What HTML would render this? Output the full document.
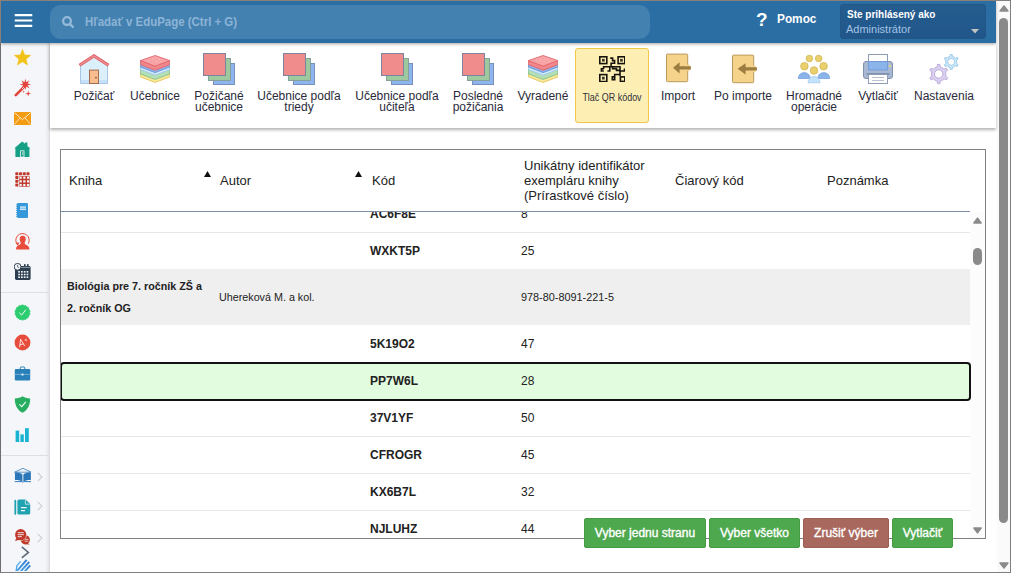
<!DOCTYPE html>
<html lang="sk">
<head>
<meta charset="utf-8">
<title>EduPage</title>
<style>
*{box-sizing:border-box;margin:0;padding:0}
html,body{width:1011px;height:573px;overflow:hidden;background:#fff;font-family:"Liberation Sans",sans-serif;color:#222}
.abs{position:absolute}
#frame{position:absolute;left:0;top:0;width:1011px;height:573px;overflow:hidden;background:#fff}
/* window border */
#b-top{left:0;top:0;width:1011px;height:1px;background:linear-gradient(90deg,#8a8078 0,#8a8078 996px,#808080 996px)}
#b-left{left:0;top:0;width:1px;height:573px;background:linear-gradient(#8a8078 0,#8a8078 43px,#6e6e6e 43px)}
#b-right{left:1010px;top:0;width:1px;height:573px;background:#7f7f7f}
#b-bottom{left:0;top:572px;width:1011px;height:1px;background:#7f7f7f}
/* top bar */
#topbar{left:1px;top:1px;width:995px;height:42px;background:#2b6ea3;box-shadow:0 1px 3px rgba(0,0,0,.35);z-index:5}
#search{left:49px;top:4px;width:600px;height:34px;border-radius:11px;background:#4381b1}
#search .ph{left:35px;top:10px;font-size:12px;font-weight:bold;color:#8db4d6;white-space:nowrap;line-height:14px;transform:scaleX(.954);transform-origin:0 50%}
#help{left:756px;top:8px;color:#fff;font-weight:bold;font-size:13px;white-space:nowrap;line-height:20px}
#help .q{position:absolute;left:-1px;top:1px;font-size:19px;line-height:20px}
#help .t{position:absolute;left:20px;top:0;transform:scaleX(.91);transform-origin:0 50%}
#userbox{left:839px;top:3px;width:146px;height:35px;background:linear-gradient(#255d8f,#21568a);border:1px solid #215687;border-radius:3px}
#userbox .l1{left:6px;top:4px;font-size:10px;font-weight:bold;color:#fff;white-space:nowrap;line-height:12px}
#userbox .l2{left:5px;top:18px;font-size:11px;color:#a3c4e4;white-space:nowrap;line-height:13px}
/* page scrollbar */
#vscroll{left:996px;top:1px;width:14px;height:571px;background:#fafafa;border-left:1px solid #fff}
/* sidebar */
#sidebar{left:1px;top:43px;width:49px;height:529px;background:linear-gradient(90deg,#f5f6f9 0,#f5f6f9 44px,#eeeff2 46px,#e2e3e6 48px,#d6d7da 49px)}
#sidebar svg{position:absolute}
.sep{position:absolute;left:0;width:48px;height:1px;background:#dedfe2}
/* toolbar */
#toolbar{left:50px;top:43px;width:946px;height:85px;background:#fff;box-shadow:0 2px 3px rgba(0,0,0,.3);z-index:3}

.ti{position:absolute;top:0;width:0;height:85px}
.ti .ic{position:absolute}
.ti .ic svg{display:block}
.ti .lbl{position:absolute;top:48px;left:0;transform:translateX(-50%);font-size:12px;line-height:11px;color:#2a2a3a;text-align:center;white-space:nowrap}
/* table */
#tbl{left:61px;top:150px;width:925px;height:389px;border:1px solid #8a8a8a;background:#fff;overflow:hidden}
.th{position:absolute;font-size:13px;line-height:15px;color:#222;white-space:nowrap}
.row{position:absolute;left:0;width:908px;height:37px;border-bottom:1px solid #e6e6e6}
.row .c{position:absolute;left:308px;top:11px;font-size:12px;font-weight:bold;line-height:14px;color:#222}
.row .n{position:absolute;left:460px;top:11px;font-size:12px;line-height:14px;color:#222}

#tbl{left:60px;top:149px;width:926px;height:390px;border:1px solid #808080;background:#fff;overflow:hidden}
#thead{left:0;top:0;width:909px;height:62px;background:#fff;border-bottom:1px solid #7d90aa;z-index:2}
#iscroll{left:909px;top:62px;width:15px;height:326px;background:#fcfcfc}
.row{position:absolute;left:0;width:909px;height:37px;border-top:1px solid #e6e6e6;border-bottom:none}
.row .c{position:absolute;left:309px;top:11px;font-size:12px;font-weight:bold;line-height:14px;color:#222}
.row .n{position:absolute;left:460px;top:11px;font-size:12px;line-height:14px;color:#222}
.row.sel{left:-1px;width:911px;height:39px;border:2px solid #111;border-radius:4px;background:#e2fcdf;z-index:1}
.row.sel .c{left:308px;top:10px}
.row.sel .n{left:459px;top:10px}
.grp{position:absolute;left:0;width:909px;height:56px;background:#efefef}
.grp .g1{position:absolute;left:6px;top:6px;font-size:11px;font-weight:bold;line-height:22px;color:#222;white-space:nowrap;transform:scaleX(.977);transform-origin:0 50%}
.grp .g2{position:absolute;left:158px;top:17px;font-size:11px;line-height:22px;color:#222;white-space:nowrap;transform:scaleX(.977);transform-origin:0 50%}
.grp .g3{position:absolute;left:460px;top:17px;font-size:11px;line-height:22px;color:#222;white-space:nowrap;transform:scaleX(.987);transform-origin:0 50%}
.btn{position:absolute;top:518px;height:30px;border-radius:2px;color:#fff;font-size:12px;line-height:29px;-webkit-text-stroke:.35px #fff;text-align:center;white-space:nowrap;z-index:6}
.g{background:#4ea84e;border:1px solid #469a46}
.r{background:#a9685d;border:1px solid #9c5d53}
</style>
</head>
<body>
<div id="frame">

<!-- top bar -->
<div id="topbar" class="abs">
  <svg class="abs" style="left:13px;top:12px" width="20" height="16" viewBox="0 0 20 16"><rect x="0.7" y="1.1" width="17.6" height="2.2" rx=".4" fill="#fff"/><rect x="0.7" y="6.4" width="17.6" height="2.2" rx=".4" fill="#fff"/><rect x="0.7" y="11.7" width="17.6" height="2.2" rx=".4" fill="#fff"/></svg>
  <div id="search" class="abs">
    <svg class="abs" style="left:11px;top:10px" width="14" height="14" viewBox="0 0 14 14"><circle cx="6" cy="6.1" r="3.9" fill="none" stroke="#94bada" stroke-width="2.3"/><path d="M9 9.1 L11.9 12" stroke="#94bada" stroke-width="2.4" stroke-linecap="round"/></svg>
    <div class="ph abs">Hľadať v EduPage (Ctrl + G)</div>
  </div>
  <div id="help" class="abs"><span class="q">?</span><span class="t">Pomoc</span></div>
  <div id="userbox" class="abs">
    <div class="l1 abs">Ste prihlásený ako</div>
    <div class="l2 abs">Administrátor</div>
    <svg class="abs" style="left:129.5px;top:23.5px" width="8" height="5" viewBox="0 0 8 5"><path d="M0 0 L8 0 L4 4.4 Z" fill="#c4c4c4"/></svg>
  </div>
</div>

<!-- page scrollbar -->
<div id="vscroll" class="abs">
  <svg class="abs" style="left:2px;top:4px" width="10" height="7" viewBox="0 0 10 7"><path d="M5 0.9 L9 6 L1 6 Z" fill="#8a8a8a" stroke="#8a8a8a" stroke-width="1.4" stroke-linejoin="round"/></svg>
  <div class="abs" style="left:2px;top:16.5px;width:9px;height:505.5px;border-radius:4.5px;background:#8a8a8a"></div>
  <svg class="abs" style="left:2px;top:561px" width="10" height="7" viewBox="0 0 10 7"><path d="M1 1 L9 1 L5 6.1 Z" fill="#8a8a8a" stroke="#8a8a8a" stroke-width="1.4" stroke-linejoin="round"/></svg>
</div>

<!-- sidebar -->
<div id="sidebar" class="abs">
  <div class="sep" style="top:249px"></div>
  <div class="sep" style="top:412px"></div>
  <svg style="left:13px;top:6px" width="17" height="17" viewBox="0 0 17 17"><path d="M8.50 0.40 L10.67 6.01 L16.68 6.34 L12.02 10.14 L13.55 15.96 L8.50 12.70 L3.45 15.96 L4.98 10.14 L0.32 6.34 L6.33 6.01 Z" fill="#f2c218" stroke="#f2c218" stroke-width=".6" stroke-linejoin="round"/></svg>
  <svg style="left:13px;top:36px" width="18" height="18" viewBox="0 0 18 18"><path d="M1.8 16.2 L9.8 8.2" stroke="#e0443a" stroke-width="2.6" stroke-linecap="round"/><path d="M11.40 -0.30 L12.32 3.18 L15.43 1.37 L13.62 4.48 L17.10 5.40 L13.62 6.32 L15.43 9.43 L12.32 7.62 L11.40 11.10 L10.48 7.62 L7.37 9.43 L9.18 6.32 L5.70 5.40 L9.18 4.48 L7.37 1.37 L10.48 3.18 Z" fill="#e0443a"/><path d="M8 10 L9.8 8.2" stroke="#f5f6f9" stroke-width=".9"/><path d="M14.20 11.60 L14.84 13.96 L17.20 14.60 L14.84 15.24 L14.20 17.60 L13.56 15.24 L11.20 14.60 L13.56 13.96 Z" fill="#e0443a"/><path d="M9.60 11.40 L9.92 12.48 L11.00 12.80 L9.92 13.12 L9.60 14.20 L9.28 13.12 L8.20 12.80 L9.28 12.48 Z" fill="#e0443a"/></svg>
  <svg style="left:13px;top:69px" width="17" height="13" viewBox="0 0 17 13"><rect x="0" y="0" width="17" height="13" fill="#f39c12"/><path d="M0.3 0.6 L8.5 7.6 L16.7 0.6" fill="none" stroke="#fdf1dd" stroke-width=".9"/><path d="M0.3 12.4 L6 6 M16.7 12.4 L11 6" stroke="#fdf1dd" stroke-width=".8"/></svg>
  <svg style="left:13px;top:98px" width="17" height="16" viewBox="0 0 17 16"><path d="M0.4 7.2 L8.2 0.4 L11 2.8 L11 1.4 L13.4 1.4 L13.4 4.9 L16.4 7.4 L15.4 7.4 L15.4 16 L1.4 16 L1.4 7.2 Z" fill="#16a085"/><rect x="6.6" y="9.8" width="3.4" height="6.2" fill="none" stroke="#f5f6f9" stroke-width=".8"/><rect x="8.2" y="11" width="1" height="3" fill="#f5f6f9" opacity=".6"/></svg>
  <svg style="left:14px;top:129px" width="15" height="15" viewBox="0 0 15.3 15.3"><rect x="0.3" y="0.3" width="3.1" height="3.1" rx=".5" fill="#c0392b"/><rect x="4.1" y="0.3" width="3.1" height="3.1" rx=".5" fill="#c0392b"/><rect x="7.9" y="0.3" width="3.1" height="3.1" rx=".5" fill="#c0392b"/><rect x="11.7" y="0.3" width="3.1" height="3.1" rx=".5" fill="#c0392b"/><rect x="0.3" y="4.1" width="3.1" height="3.1" rx=".5" fill="#c0392b"/><rect x="0.3" y="7.9" width="3.1" height="3.1" rx=".5" fill="#c0392b"/><rect x="0.3" y="11.7" width="3.1" height="3.1" rx=".5" fill="#c0392b"/><rect x="4.2" y="4.2" width="10.8" height="10.8" rx=".8" fill="#c0392b"/><rect x="4.60" y="4.60" width="2.3" height="2.3" fill="#f5f6f9"/><rect x="8.40" y="4.60" width="2.3" height="2.3" fill="#f5f6f9"/><rect x="12.20" y="4.60" width="2.3" height="2.3" fill="#f5f6f9"/><rect x="4.60" y="8.40" width="2.3" height="2.3" fill="#f5f6f9"/><rect x="8.40" y="8.40" width="2.3" height="2.3" fill="#f5f6f9"/><rect x="12.20" y="8.40" width="2.3" height="2.3" fill="#f5f6f9"/><rect x="4.60" y="12.20" width="2.3" height="2.3" fill="#f5f6f9"/><rect x="8.40" y="12.20" width="2.3" height="2.3" fill="#f5f6f9"/><rect x="12.20" y="12.20" width="2.3" height="2.3" fill="#f5f6f9"/></svg>
  <svg style="left:15px;top:160px" width="12" height="15" viewBox="0 0 12 15"><rect x="1" y="0" width="11" height="15" rx="1.2" fill="#3498db"/><rect x="0" y="1.4" width="1.4" height=".9" fill="#3498db"/><rect x="0" y="3.3" width="1.4" height=".9" fill="#3498db"/><rect x="0" y="5.2" width="1.4" height=".9" fill="#3498db"/><rect x="0" y="7.1" width="1.4" height=".9" fill="#3498db"/><rect x="0" y="9.0" width="1.4" height=".9" fill="#3498db"/><rect x="0" y="10.9" width="1.4" height=".9" fill="#3498db"/><rect x="0" y="12.8" width="1.4" height=".9" fill="#3498db"/><rect x="4" y="3.4" width="6" height="3.6" fill="#d6eaf8"/><path d="M4 5.2 L10 5.2" stroke="#3498db" stroke-width=".7"/></svg>
  <svg style="left:13px;top:189px" width="17" height="18" viewBox="0 0 17 18"><path d="M3.6 12.8 A6.7 6.7 0 1 1 14.2 11.8" fill="none" stroke="#e74c3c" stroke-width="1"/><path d="M1.6 10.8 L3.8 13.6 L5.6 10.6 Z" fill="#e74c3c"/><path d="M8.7 3.8 C11.3 3.8 11.9 5.8 11.7 7.6 C11.6 9 10.9 10 10.7 10.8 C10.5 11.8 11 12.4 12.6 13.1 C14.4 13.9 15.2 14.8 15.4 17.6 L2 17.6 C2.2 14.8 3 13.9 4.8 13.1 C6.4 12.4 6.9 11.8 6.7 10.8 C6.5 10 5.8 9 5.7 7.6 C5.5 5.8 6.1 3.8 8.7 3.8 Z" fill="#e74c3c"/></svg>
  <svg style="left:13px;top:219.8px" width="17" height="18" viewBox="0 0 17 18"><rect x="1" y="3" width="15.6" height="14" rx="1.4" fill="#2c3e50"/><rect x="10" y="1" width="1.6" height="3.4" rx=".6" fill="#2c3e50"/><rect x="13" y="1" width="1.6" height="3.4" rx=".6" fill="#2c3e50"/><path d="M7 4.4 L16 4.4" stroke="#f5f6f9" stroke-width=".5"/><rect x="4.2" y="8.0" width="1.7" height="1.6" fill="#f5f6f9"/><rect x="7.0" y="8.0" width="1.7" height="1.6" fill="#f5f6f9"/><rect x="9.8" y="8.0" width="1.7" height="1.6" fill="#f5f6f9"/><rect x="12.6" y="8.0" width="1.7" height="1.6" fill="#f5f6f9"/><rect x="4.2" y="10.7" width="1.7" height="1.6" fill="#f5f6f9"/><rect x="7.0" y="10.7" width="1.7" height="1.6" fill="#f5f6f9"/><rect x="9.8" y="10.7" width="1.7" height="1.6" fill="#f5f6f9"/><rect x="12.6" y="10.7" width="1.7" height="1.6" fill="#f5f6f9"/><rect x="4.2" y="13.4" width="1.7" height="1.6" fill="#f5f6f9"/><rect x="7.0" y="13.4" width="1.7" height="1.6" fill="#f5f6f9"/><rect x="9.8" y="13.4" width="1.7" height="1.6" fill="#f5f6f9"/><rect x="12.6" y="13.4" width="1.7" height="1.6" fill="#f5f6f9"/><circle cx="3.6" cy="3.8" r="3.4" fill="#f5f6f9" stroke="#2c3e50" stroke-width="1"/><path d="M3.6 2 L3.6 4 L5 4.6" fill="none" stroke="#2c3e50" stroke-width=".7"/></svg>
  <svg style="left:13px;top:261px" width="17" height="17" viewBox="0 0 17 17"><path d="M8.50 0.70 L10.10 1.48 L11.88 1.47 L12.99 2.87 L14.60 3.64 L14.99 5.38 L16.10 6.76 L15.70 8.50 L16.10 10.24 L14.99 11.62 L14.60 13.36 L12.99 14.13 L11.88 15.53 L10.10 15.52 L8.50 16.30 L6.90 15.52 L5.12 15.53 L4.01 14.13 L2.40 13.36 L2.01 11.62 L0.90 10.24 L1.30 8.50 L0.90 6.76 L2.01 5.38 L2.40 3.64 L4.01 2.87 L5.12 1.47 L6.90 1.48 Z" fill="#2ecc71" stroke="#2ecc71" stroke-width=".5" stroke-linejoin="round"/><path d="M5.2 8.8 L7.6 11 L11.8 5.8" fill="none" stroke="#eafff1" stroke-width="1"/></svg>
  <svg style="left:13px;top:291px" width="17" height="17" viewBox="0 0 17 17"><circle cx="8.5" cy="8.5" r="7.9" fill="#e74c3c"/><g transform="rotate(-12 8 9)"><path d="M4.8 12.6 L7.4 5 L10 12.6 M5.7 10.2 L9.2 10.2" fill="none" stroke="#fbe3e0" stroke-width=".9"/></g><path d="M10.8 6 L13 6 M11.9 4.9 L11.9 7.1" stroke="#fbe3e0" stroke-width=".7"/></svg>
  <svg style="left:13px;top:323px" width="17" height="15" viewBox="0 0 17 15"><rect x="6.2" y="1" width="4.6" height="3" rx="1" fill="none" stroke="#2980b9" stroke-width="1"/><rect x="0.8" y="3.1" width="15.4" height="11.3" rx="1.2" fill="#2980b9"/><path d="M0.6 8.4 L16.4 8.4" stroke="#8fbfe2" stroke-width=".7"/><rect x="7.4" y="7.4" width="2.2" height="2.2" rx=".6" fill="#d6eaf8"/></svg>
  <svg style="left:13px;top:353px" width="17" height="17" viewBox="0 0 17 17"><path d="M8.5 0.2 C10.6 1.6 13 2.2 16.2 2.4 C16.2 9 13.6 14 8.5 16.8 C3.4 14 0.8 9 0.8 2.4 C4 2.2 6.4 1.6 8.5 0.2 Z" fill="#27ae60"/><path d="M5.4 8.4 L7.8 10.6 L11.8 5.8" fill="none" stroke="#f0fff5" stroke-width="1.1"/></svg>
  <svg style="left:14px;top:385px" width="15" height="14" viewBox="0 0 15 14"><rect x="0.6" y="2.6" width="3.6" height="11.4" fill="#1ab3d2"/><rect x="5.4" y="6.4" width="3.4" height="7.6" fill="#1ab3d2"/><rect x="10" y="0.2" width="3.8" height="13.8" fill="#1ab3d2"/></svg>
  <svg style="left:12.6px;top:425px" width="17.8" height="15" viewBox="0 0 19 15" preserveAspectRatio="none"><path d="M9.5 0.3 L18.4 4.2 L0.6 4.2 Z" fill="none" stroke="#2b77b8" stroke-width=".8"/><path d="M1 4.6 C4 4.4 7 5 9 6.4 L9 13.6 C7 12.4 4 11.8 1 12 Z" fill="#2b77b8"/><path d="M18 4.6 C15 4.4 12 5 10 6.4 L10 13.6 C12 12.4 15 11.8 18 12 Z" fill="#2b77b8"/><path d="M0.8 13.6 L8.6 13.6 L9.5 14.4 L10.4 13.6 L18.2 13.6" fill="none" stroke="#2b77b8" stroke-width="1"/></svg>
  <svg style="left:13px;top:455.6px" width="17" height="16" viewBox="0 0 17 16"><rect x="0.4" y="0.8" width="1.8" height="15" rx=".9" fill="#20a3b1"/><path d="M3.4 2 Q3.4 0.4 5 0.4 L11.6 0.4 L16.2 5 L16.2 14 Q16.2 15.6 14.6 15.6 L5 15.6 Q3.4 15.6 3.4 14 Z" fill="#20a3b1"/><path d="M11.4 0.8 L11.4 5.2 L15.8 5.2" fill="none" stroke="#f5f6f9" stroke-width=".7"/><path d="M7 8.6 L12.6 8.6 M7 11.6 L11 11.6" stroke="#f5f6f9" stroke-width="1.3"/></svg>
  <svg style="left:13px;top:486px" width="17" height="16" viewBox="0 0 17 16"><circle cx="11.3" cy="10.8" r="4.6" fill="#c0392b"/><path d="M13.6 14 L16 15.6 L11.6 15.2 Z" fill="#c0392b"/><circle cx="6.7" cy="5.7" r="6.1" fill="#f5f6f9"/><circle cx="6.7" cy="5.7" r="5.6" fill="#c0392b"/><path d="M2.4 9 L1 12 L5.4 10.8 Z" fill="#c0392b"/><path d="M3.7 3.7 L9.8 3.7 M3.7 5.7 L9.8 5.7 M3.7 7.7 L7.8 7.7" stroke="#f5f6f9" stroke-width=".9"/><path d="M11 10.4 L14.4 10.4 M10.6 12.2 L14.4 12.2" stroke="#f5f6f9" stroke-width=".7"/></svg>
  <svg style="left:36px;top:428.5px" width="6" height="10" viewBox="0 0 6 10"><path d="M0.8 0.8 L5 5 L0.8 9.2" fill="none" stroke="#cccdd0" stroke-width="1.1"/></svg>
  <svg style="left:36px;top:458px" width="6" height="10" viewBox="0 0 6 10"><path d="M0.8 0.8 L5 5 L0.8 9.2" fill="none" stroke="#cccdd0" stroke-width="1.1"/></svg>
  <svg style="left:36px;top:489.5px" width="6" height="10" viewBox="0 0 6 10"><path d="M0.8 0.8 L5 5 L0.8 9.2" fill="none" stroke="#cccdd0" stroke-width="1.1"/></svg>
  <svg style="left:20px;top:503px" width="9" height="13" viewBox="0 0 9 13"><path d="M0.8 0.9 L7.4 6.4 L0.8 11.9" fill="none" stroke="#5d6b7a" stroke-width="1.6"/></svg>
  <svg style="left:14px;top:515px" width="17" height="13" viewBox="0 0 17 13"><defs><linearGradient id="pg" x1="0" y1="0" x2="1" y2="0"><stop offset="0" stop-color="#4aa6e8"/><stop offset="1" stop-color="#2c7bd0"/></linearGradient></defs><g stroke="url(#pg)" stroke-width="1.9" fill="none" stroke-linecap="butt"><path d="M1.2 13.9 L11.6 1.9"/><path d="M5.2 13.9 L14.2 3.9"/><path d="M9.3 13.9 L15.2 7.3"/></g><path d="M1.9 7.4 L1 14" stroke="#4aa6e8" stroke-width="1.3" fill="none"/><path d="M2 7.6 L5.6 3.4" stroke="#4aa6e8" stroke-width="1.3" fill="none"/></svg>
</div>

<!-- toolbar -->
<div id="toolbar" class="abs">
  <div class="ti" style="left:44px"><div class="ic" style="left:-17px;top:10px"><svg width="34" height="32" viewBox="0 0 34 32"><path d="M3.5 11 L17 2.6 L30.5 11 L30.5 30.5 L3.5 30.5 Z" fill="#dcf0fc" stroke="#a8c6e6" stroke-width="1"/><rect x="4" y="27" width="26" height="3" fill="#c5e0f7"/><path d="M2.5 12.3 L17 2.9 L31.5 12.3" fill="none" stroke="#d8585c" stroke-width="3.1" stroke-linejoin="miter"/><path d="M2.8 12.1 L17 3 L31.2 12.1" fill="none" stroke="#f08d90" stroke-width="1.5"/><rect x="12.5" y="17.1" width="9" height="13.4" fill="#f9bd8f" stroke="#a56c4e" stroke-width="1"/><circle cx="19" cy="24.6" r=".9" fill="#7a4a34"/></svg></div><div class="lbl">Požičať</div></div>
  <div class="ti" style="left:105px"><div class="ic" style="left:-15px;top:11.5px"><svg width="30.2" height="28.4" viewBox="0 0 30.2 28.4"><path d="M0.4 17.5 L15.1 23.1 L29.8 17.5 L29.8 21.9 L15.1 27.5 L0.4 21.9 Z" fill="#fbe89a" stroke="#e3c65c" stroke-width=".9" stroke-linejoin="round"/><path d="M0.4 14 L15.1 19.6 L29.8 14 L29.8 18.9 L15.1 24.5 L0.4 18.9 Z" fill="#b4dfb4" stroke="#86c389" stroke-width=".9" stroke-linejoin="round"/><path d="M0.4 11.5 L15.1 17.1 L29.8 11.5 L29.8 14.6 L15.1 20.2 L0.4 14.6 Z" fill="#d0ebfd" stroke="#9cc7ed" stroke-width=".9" stroke-linejoin="round"/><path d="M0.4 9 L15.1 14.6 L29.8 9 L29.8 12.0 L15.1 17.6 L0.4 12.0 Z" fill="#8fb5ee" stroke="#6a93d6" stroke-width=".9" stroke-linejoin="round"/><path d="M0.4 5.6 L15.1 11.2 L29.8 5.6 L29.8 9.7 L15.1 15.299999999999999 L0.4 9.7 Z" fill="#f2878b" stroke="#dc686d" stroke-width=".9" stroke-linejoin="round"/><path d="M0.4 5.6 L15.1 0.5 L29.8 5.6 L15.1 11.1 Z" fill="#f8a3a6" stroke="#e0696e" stroke-width=".9" stroke-linejoin="round"/><g fill="#fcc9ca"><circle cx="9" cy="5.2" r=".5"/><circle cx="12.6" cy="4" r=".5"/><circle cx="16" cy="6.6" r=".5"/><circle cx="19.6" cy="4.6" r=".5"/><circle cx="21.4" cy="6.8" r=".5"/></g></svg></div><div class="lbl">Učebnice</div></div>
  <div class="ti" style="left:169px"><div class="ic" style="left:-16px;top:10px"><svg width="33" height="33" viewBox="0 0 33 33"><rect x="10.5" y="10.5" width="21" height="21" fill="#8db5f0" stroke="#7890b8"/><rect x="5.5" y="5.5" width="22" height="22" fill="#9ec89e" stroke="#86a19a"/><rect x="0.5" y="0.5" width="22" height="22" fill="#f08c8c" stroke="#7b859c"/></svg></div><div class="lbl">Požičané<br>učebnice</div></div>
  <div class="ti" style="left:249px"><div class="ic" style="left:-16px;top:10px"><svg width="33" height="33" viewBox="0 0 33 33"><rect x="10.5" y="10.5" width="21" height="21" fill="#8db5f0" stroke="#7890b8"/><rect x="5.5" y="5.5" width="22" height="22" fill="#9ec89e" stroke="#86a19a"/><rect x="0.5" y="0.5" width="22" height="22" fill="#f08c8c" stroke="#7b859c"/></svg></div><div class="lbl">Učebnice podľa<br>triedy</div></div>
  <div class="ti" style="left:347px"><div class="ic" style="left:-16px;top:10px"><svg width="33" height="33" viewBox="0 0 33 33"><rect x="10.5" y="10.5" width="21" height="21" fill="#8db5f0" stroke="#7890b8"/><rect x="5.5" y="5.5" width="22" height="22" fill="#9ec89e" stroke="#86a19a"/><rect x="0.5" y="0.5" width="22" height="22" fill="#f08c8c" stroke="#7b859c"/></svg></div><div class="lbl">Učebnice podľa<br>učiteľa</div></div>
  <div class="ti" style="left:428px"><div class="ic" style="left:-16px;top:10px"><svg width="33" height="33" viewBox="0 0 33 33"><rect x="10.5" y="10.5" width="21" height="21" fill="#8db5f0" stroke="#7890b8"/><rect x="5.5" y="5.5" width="22" height="22" fill="#9ec89e" stroke="#86a19a"/><rect x="0.5" y="0.5" width="22" height="22" fill="#f08c8c" stroke="#7b859c"/></svg></div><div class="lbl">Posledné<br>požičania</div></div>
  <div class="ti" style="left:493px"><div class="ic" style="left:-15px;top:11.5px"><svg width="30.2" height="28.4" viewBox="0 0 30.2 28.4"><path d="M0.4 17.5 L15.1 23.1 L29.8 17.5 L29.8 21.9 L15.1 27.5 L0.4 21.9 Z" fill="#fbe89a" stroke="#e3c65c" stroke-width=".9" stroke-linejoin="round"/><path d="M0.4 14 L15.1 19.6 L29.8 14 L29.8 18.9 L15.1 24.5 L0.4 18.9 Z" fill="#b4dfb4" stroke="#86c389" stroke-width=".9" stroke-linejoin="round"/><path d="M0.4 11.5 L15.1 17.1 L29.8 11.5 L29.8 14.6 L15.1 20.2 L0.4 14.6 Z" fill="#d0ebfd" stroke="#9cc7ed" stroke-width=".9" stroke-linejoin="round"/><path d="M0.4 9 L15.1 14.6 L29.8 9 L29.8 12.0 L15.1 17.6 L0.4 12.0 Z" fill="#8fb5ee" stroke="#6a93d6" stroke-width=".9" stroke-linejoin="round"/><path d="M0.4 5.6 L15.1 11.2 L29.8 5.6 L29.8 9.7 L15.1 15.299999999999999 L0.4 9.7 Z" fill="#f2878b" stroke="#dc686d" stroke-width=".9" stroke-linejoin="round"/><path d="M0.4 5.6 L15.1 0.5 L29.8 5.6 L15.1 11.1 Z" fill="#f8a3a6" stroke="#e0696e" stroke-width=".9" stroke-linejoin="round"/><g fill="#fcc9ca"><circle cx="9" cy="5.2" r=".5"/><circle cx="12.6" cy="4" r=".5"/><circle cx="16" cy="6.6" r=".5"/><circle cx="19.6" cy="4.6" r=".5"/><circle cx="21.4" cy="6.8" r=".5"/></g></svg></div><div class="lbl">Vyradené</div></div>
  <div class="ti" style="left:628px"><div class="ic" style="left:-12px;top:10px"><svg width="26" height="30" viewBox="0 0 26 30"><rect x="0.5" y="1.1" width="21.2" height="27.6" rx="1" fill="#f5d38b" stroke="#b89a5e"/><rect x="20.7" y="11.6" width="3" height="6.4" fill="#f5d38b"/><path d="M7.0 14.8 L13.6 9.2 L13.6 13.2 L24.9 13.2 L24.9 16.4 L13.6 16.4 L13.6 20.4 Z" fill="#9b7c41"/></svg></div><div class="lbl">Import</div></div>
  <div class="ti" style="left:693px"><div class="ic" style="left:-11px;top:11.2px"><svg width="26" height="30" viewBox="0 0 26 30"><rect x="0.5" y="1.1" width="21.2" height="27.6" rx="1" fill="#f5d38b" stroke="#b89a5e"/><rect x="20.7" y="11.6" width="3" height="6.4" fill="#f5d38b"/><path d="M5.6 14.8 L13.6 9.2 L13.6 13.2 L24.9 13.2 L24.9 16.4 L13.6 16.4 L13.6 20.4 Z" fill="#9b7c41"/></svg></div><div class="lbl">Po importe</div></div>
  <div class="ti" style="left:764px"><div class="ic" style="left:-17px;top:11px"><svg width="34" height="30" viewBox="0 0 34 30">
<path d="M1.2 24.5 A6 5.9 0 0 1 13.2 24.5 Z" fill="#8ab4ea" stroke="#6f9ad8" stroke-width=".7"/>
<path d="M20.8 24.5 A6 5.9 0 0 1 32.8 24.5 Z" fill="#8ab4ea" stroke="#6f9ad8" stroke-width=".7"/>
<path d="M11 28.8 A6 6.3 0 0 1 23 28.8 Z" fill="#c3e2fb" stroke="#9cc3e8" stroke-width=".7"/>
<g fill="#e9d06c" stroke="#cdb150" stroke-width=".7"><circle cx="12.4" cy="4.5" r="3.3"/><circle cx="21.6" cy="4.5" r="3.3"/><circle cx="7.4" cy="12.2" r="3.8"/><circle cx="26.6" cy="12.2" r="3.8"/><circle cx="17" cy="16.5" r="3.8"/></g>
</svg></div><div class="lbl">Hromadné<br>operácie</div></div>
  <div class="ti" style="left:828px"><div class="ic" style="left:-16px;top:10px"><svg width="32" height="32" viewBox="0 0 32 32">
<rect x="6.5" y="1.5" width="19" height="10" fill="#fff" stroke="#8e9db6"/>
<rect x="1.5" y="8.5" width="29" height="17" rx="2.5" fill="#a9b9d4" stroke="#7f92b0"/>
<rect x="6.5" y="8.5" width="19" height="8.5" fill="#8ab4ea" stroke="#6f97d6" stroke-width=".8"/>
<rect x="4.5" y="20" width="23" height="2" fill="#7f92b0"/>
<rect x="6.5" y="21.5" width="19" height="9" fill="#fff" stroke="#8e9db6"/>
<path d="M10 24.5 L22 24.5 M10 27.5 L22 27.5" stroke="#b9c3d2" stroke-width="1"/>
<circle cx="28" cy="13" r="1" fill="#f2dc7a"/>
</svg></div><div class="lbl">Vytlačiť</div></div>
  <div class="ti" style="left:894px"><div class="ic" style="left:-16px;top:10px"><svg width="32" height="32" viewBox="0 0 32 32"><path d="M9.48 11.38 L11.92 11.38 L12.20 13.96 L13.28 14.28 L14.30 14.76 L15.23 15.40 L16.05 16.18 L18.43 15.14 L19.64 17.24 L17.55 18.78 L17.81 19.87 L17.90 21.00 L17.81 22.13 L17.55 23.22 L19.64 24.76 L18.43 26.86 L16.05 25.82 L15.23 26.60 L14.30 27.24 L13.28 27.72 L12.20 28.04 L11.92 30.62 L9.48 30.62 L9.20 28.04 L8.12 27.72 L7.10 27.24 L6.17 26.60 L5.35 25.82 L2.97 26.86 L1.76 24.76 L3.85 23.22 L3.59 22.13 L3.50 21.00 L3.59 19.87 L3.85 18.78 L1.76 17.24 L2.97 15.14 L5.35 16.18 L6.17 15.40 L7.10 14.76 L8.12 14.28 L9.20 13.96 Z M6.50 21.00 A4.2 4.2 0 1 0 14.90 21.00 A4.2 4.2 0 1 0 6.50 21.00 Z" fill="#dad0ef" stroke="#b29dd5" stroke-width=".8" fill-rule="evenodd" stroke-linejoin="round"/><path d="M22.26 1.46 L24.14 1.46 L24.36 3.42 L25.21 3.67 L26.00 4.05 L26.72 4.55 L27.36 5.15 L29.17 4.37 L30.11 5.99 L28.53 7.17 L28.73 8.02 L28.80 8.90 L28.73 9.78 L28.53 10.63 L30.11 11.81 L29.17 13.43 L27.36 12.65 L26.72 13.25 L26.00 13.75 L25.21 14.13 L24.36 14.38 L24.14 16.34 L22.26 16.34 L22.04 14.38 L21.19 14.13 L20.40 13.75 L19.68 13.25 L19.04 12.65 L17.23 13.43 L16.29 11.81 L17.87 10.63 L17.67 9.78 L17.60 8.90 L17.67 8.02 L17.87 7.17 L16.29 5.99 L17.23 4.37 L19.04 5.15 L19.68 4.55 L20.40 4.05 L21.19 3.67 L22.04 3.42 Z M19.70 8.90 A3.5 3.5 0 1 0 26.70 8.90 A3.5 3.5 0 1 0 19.70 8.90 Z" fill="#cde9fc" stroke="#8dbfe0" stroke-width=".8" fill-rule="evenodd" stroke-linejoin="round"/></svg></div><div class="lbl">Nastavenia</div></div>
  <div class="abs" style="left:525px;top:5px;width:74px;height:75px;background:#fdeeb4;border:1px solid #f1c74a;border-radius:3px"></div>
  <div class="ti" style="left:562px"><div class="ic" style="left:-13.4px;top:12.9px"><svg width="26.6" height="26.6" viewBox="0 0 26.6 26.6" fill="none" stroke="#15130c" stroke-width="1.6">
<rect x="0.8" y="0.8" width="7" height="6.8"/><rect x="19.1" y="0.8" width="6.7" height="6.8"/><rect x="0.8" y="18.6" width="7" height="7"/><rect x="21.4" y="20.9" width="4.4" height="4.5"/>
<g fill="#3a372c" stroke="none"><rect x="3" y="2.9" width="2.7" height="2.7"/><rect x="21.1" y="2.9" width="2.7" height="2.7"/><rect x="3" y="20.8" width="2.7" height="2.7"/></g>
<path d="M11.2 2.1 L13.6 2.1 L13.6 4.6 L15.6 4.6 L15.6 7.3 L12.1 7.3 L12.1 10.8"/>
<path d="M4.6 13 L4.6 10.8 L21 10.8 L21 20.1"/>
<path d="M4.6 12.9 L2.4 12.9 L2.4 15 L4.8 15"/>
<path d="M10.8 10.8 L10.8 15 L8.4 15"/>
<path d="M13.6 10.8 L13.6 12.6 L17.5 12.6 L17.5 14.4 L21 14.4"/>
<path d="M21 15 L25.5 15 L25.5 12.4"/>
<path d="M21 18.5 L15.7 18.5 L15.7 20.9 L13.3 20.9 L13.3 23.6 L15.7 23.6 L15.7 20.9"/>
</svg></div><div class="lbl" style="font-size:10px;top:48.7px;color:#30303a;transform:translateX(-50%) scaleX(.895)">Tlač QR kódov</div></div>
</div>

<!-- table -->
<div id="tbl" class="abs">
  <div id="rows" class="abs" style="left:0;top:0;width:909px;height:388px">
  <div class="row" style="top:45px"><span class="c">AC6F8E</span><span class="n">8</span></div>
  <div class="row" style="top:82px"><span class="c">WXKT5P</span><span class="n">25</span></div>
  <div class="row" style="top:175px;border-top-color:#fff"><span class="c">5K19O2</span><span class="n">47</span></div>
  <div class="row sel" style="top:212px"><span class="c">PP7W6L</span><span class="n">28</span></div>
  <div class="row" style="top:249px"><span class="c">37V1YF</span><span class="n">50</span></div>
  <div class="row" style="top:286px"><span class="c">CFROGR</span><span class="n">45</span></div>
  <div class="row" style="top:323px"><span class="c">KX6B7L</span><span class="n">32</span></div>
  <div class="row" style="top:360px"><span class="c">NJLUHZ</span><span class="n">44</span></div>
  <div class="grp" style="top:119px"><div class="g1">Biológia pre 7. ročník ZŠ a<br>2. ročník OG</div><div class="g2">Uhereková M. a kol.</div><div class="g3">978-80-8091-221-5</div></div>
  </div>
  <div id="thead" class="abs">
  <div class="th" style="left:8px;top:23px">Kniha</div>
  <div class="th" style="left:159px;top:23px">Autor</div>
  <div class="th" style="left:311px;top:23px">Kód</div>
  <div class="th" style="left:463px;top:8px">Unikátny identifikátor<br>exempláru knihy<br>(Prírastkové číslo)</div>
  <div class="th" style="left:614px;top:23px">Čiarový kód</div>
  <div class="th" style="left:766px;top:23px">Poznámka</div>
  <svg class="abs" style="left:143px;top:21px" width="7" height="6" viewBox="0 0 7 6"><path d="M3.5 0 L7 6 L0 6 Z" fill="#111"/></svg>
  <svg class="abs" style="left:294px;top:21px" width="7" height="6" viewBox="0 0 7 6"><path d="M3.5 0 L7 6 L0 6 Z" fill="#111"/></svg>
  </div>
  <div id="iscroll" class="abs">
  <svg class="abs" style="left:3px;top:5px" width="9" height="7" viewBox="0 0 9 7"><path d="M4.5 1.1 L8.1 6 L0.9 6 Z" fill="#8a8a8a" stroke="#8a8a8a" stroke-width="1.5" stroke-linejoin="round"/></svg>
  <div class="abs" style="left:3px;top:36px;width:9px;height:17px;border-radius:4.5px;background:#8a8a8a"></div>
  <svg class="abs" style="left:3px;top:315px" width="9" height="7" viewBox="0 0 9 7"><path d="M0.9 1 L8.1 1 L4.5 5.9 Z" fill="#8a8a8a" stroke="#8a8a8a" stroke-width="1.5" stroke-linejoin="round"/></svg>
  </div>
</div>

<!-- buttons -->
<div class="btn g" style="left:584px;width:122px">Vyber jednu stranu</div>
<div class="btn g" style="left:709px;width:91px">Vyber všetko</div>
<div class="btn r" style="left:803px;width:86px">Zrušiť výber</div>
<div class="btn g" style="left:892px;width:61px">Vytlačiť</div>

<!-- window border -->
<div id="b-top" class="abs" style="z-index:20"></div>
<div id="b-left" class="abs" style="z-index:20"></div>
<div id="b-right" class="abs" style="z-index:20"></div>
<div id="b-bottom" class="abs" style="z-index:20"></div>
</div>
</body>
</html>
